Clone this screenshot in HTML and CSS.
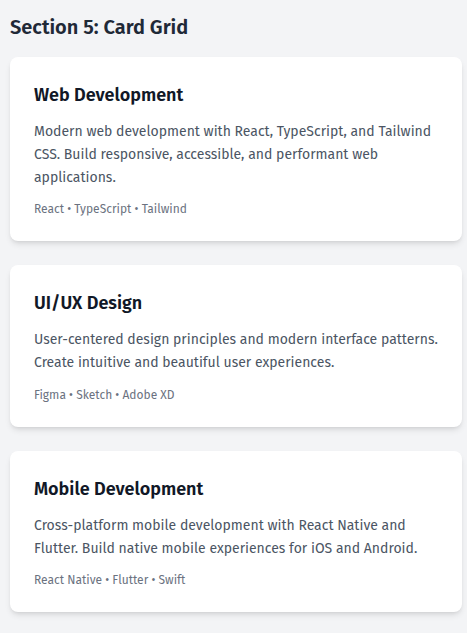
FILE: index.html
```html
<!DOCTYPE html>
<html lang="en">
<head>
<meta charset="utf-8">
<title>Section 5: Card Grid</title>
<link rel="stylesheet" href="styles.css">
</head>
<body>
<section class="section">
  <h2 class="section-title">Section 5: Card Grid</h2>
  <div class="grid">
    <article class="card">
      <h3 class="card-title">Web Development</h3>
      <p class="card-text">Modern web development with React, TypeScript, and Tailwind CSS. Build responsive, accessible, and performant web applications.</p>
      <p class="card-tags">React • TypeScript • Tailwind</p>
    </article>
    <article class="card">
      <h3 class="card-title">UI/UX Design</h3>
      <p class="card-text">User-centered design principles and modern interface patterns. Create intuitive and beautiful user experiences.</p>
      <p class="card-tags">Figma • Sketch • Adobe XD</p>
    </article>
    <article class="card">
      <h3 class="card-title">Mobile Development</h3>
      <p class="card-text">Cross-platform mobile development with React Native and Flutter. Build native mobile experiences for iOS and Android.</p>
      <p class="card-tags">React Native • Flutter • Swift</p>
    </article>
  </div>
</section>
</body>
</html>
```
FILE: styles.css
```css
* { box-sizing: border-box; }
html, body { margin: 0; padding: 0; }
body {
  background: #f3f4f6;
  font-family: "Fira Sans", "Noto Sans", "Open Sans", sans-serif;
  color: #1f2937;
}
.section {
  padding: 13px 5px 20px 10px;
}
.section-title {
  margin: 0 0 16px;
  font-size: 20px;
  line-height: 28px;
  font-weight: 600;
  color: #1f2937;
}
.grid {
  display: flex;
  flex-direction: column;
  gap: 24px;
}
.card {
  background: #fff;
  border-radius: 8px;
  padding: 24px;
  box-shadow: 0 4px 6px -1px rgba(0,0,0,0.1), 0 2px 4px -2px rgba(0,0,0,0.1);
}
.card-title {
  margin: 0 0 12px;
  font-size: 18px;
  line-height: 28px;
  font-weight: 600;
  color: #111827;
}
.card-text {
  margin: 0;
  font-size: 14px;
  line-height: 22.75px;
  color: #4b5563;
}
.card-tags {
  margin: 12px 0 0;
  font-size: 12px;
  line-height: 16px;
  color: #6b7280;
}
```
